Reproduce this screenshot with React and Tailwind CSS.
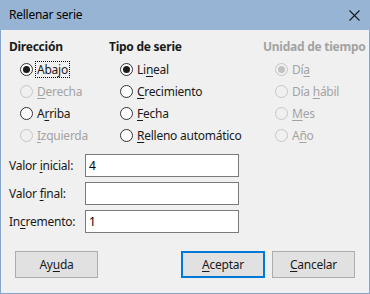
import React from 'react';

const font = { fontFamily: '"Noto Sans", "Open Sans", sans-serif' };

function U({ children }) {
  return <span className="underline underline-offset-2">{children}</span>;
}

function Radio({ checked, disabled, focus, children }) {
  const ring = disabled ? 'border-[#c6c6c6] bg-[#f0f0f0]' : 'border-[#333] bg-white';
  const dot = disabled ? 'bg-[#c2c2c2]' : 'bg-[#1a1a1a]';
  const text = disabled ? 'text-[#a3a3a3]' : 'text-[#1a1a1a]';
  return (
    <div className="flex items-center h-[22px] whitespace-nowrap">
      <span className={`w-[13px] h-[13px] rounded-full border flex items-center justify-center shrink-0 ${ring}`}>
        {checked && <span className={`w-[7px] h-[7px] rounded-full ${dot}`} />}
      </span>
      <span
        className={`ml-[3px] px-[1px] leading-[15px] ${text} ${focus ? 'outline-1 outline-dotted outline-[#000]' : ''}`}
      >
        {children}
      </span>
    </div>
  );
}

function Field({ label, value }) {
  return (
    <div className="flex items-center h-[23px]">
      <span className="w-[76px] text-[#1a1a1a] whitespace-nowrap">{label}</span>
      <div className="w-[154px] h-[23px] bg-white border border-[#7a7a7a] px-[3px] flex items-center text-[#000]">
        {value}
      </div>
    </div>
  );
}

function Btn({ primary, children }) {
  return (
    <div
      className={`h-[27px] flex items-center justify-center bg-[#e1e1e1] text-[#1a1a1a] ${
        primary ? 'border-2 border-[#0078d7]' : 'border border-[#adadad]'
      }`}
    >
      {children}
    </div>
  );
}

export default function App() {
  return (
    <div
      className="w-[370px] h-[294px] flex flex-col border-x border-b border-[#86a6cc] text-[12px] tracking-[-0.25px] bg-[#f0f0f0]"
      style={font}
    >
      {/* title bar */}
      <div className="h-[30px] bg-[#97b4d4] flex items-center justify-between pl-2 pr-[9px] -mx-px">
        <span className="text-[12px] text-[#000] pl-px">Rellenar serie</span>
        <svg width="11" height="11" viewBox="0 0 11 11" className="mr-[1px]">
          <path d="M0.5 0.5 L10.5 10.5 M10.5 0.5 L0.5 10.5" stroke="#1a1a1a" strokeWidth="1.1" fill="none" />
        </svg>
      </div>

      <div className="flex flex-col pl-2 pt-[9px]">
        {/* option groups */}
        <div className="flex">
          <div className="w-[100px]">
            <div className="font-bold h-[16px] leading-[16px] text-[#1a1a1a] whitespace-nowrap">Dirección</div>
            <div className="pl-[11px] mt-[3px]">
              <Radio checked focus>Abajo</Radio>
              <Radio disabled><U>D</U>erecha</Radio>
              <Radio>A<U>r</U>riba</Radio>
              <Radio disabled><U>I</U>zquierda</Radio>
            </div>
          </div>
          <div className="w-[154px]">
            <div className="font-bold h-[16px] leading-[16px] text-[#1a1a1a] whitespace-nowrap">Tipo de serie</div>
            <div className="pl-[11px] mt-[3px]">
              <Radio checked>Li<U>n</U>eal</Radio>
              <Radio><U>C</U>recimiento</Radio>
              <Radio><U>F</U>echa</Radio>
              <Radio><U>R</U>elleno automático</Radio>
            </div>
          </div>
          <div>
            <div className="font-bold h-[16px] leading-[16px] text-[#a3a3a3] whitespace-nowrap">Unidad de tiempo</div>
            <div className="pl-[12px] mt-[3px]">
              <Radio checked disabled>Dí<U>a</U></Radio>
              <Radio disabled>Día <U>h</U>ábil</Radio>
              <Radio disabled><U>M</U>es</Radio>
              <Radio disabled>A<U>ñ</U>o</Radio>
            </div>
          </div>
        </div>

        {/* value fields */}
        <div className="flex flex-col gap-[5px] mt-[8px]">
          <Field label={<>Valor <U>i</U>nicial:</>} value="4" />
          <Field label={<>Valor <U>f</U>inal:</>} value="" />
          <Field label={<>In<U>c</U>remento:</>} value="1" />
        </div>

        {/* buttons */}
        <div className="flex mt-[18px] pl-[6px] pr-[14px]">
          <div className="w-[83px]"><Btn>Ay<U>u</U>da</Btn></div>
          <div className="flex-1" />
          <div className="w-[84px]"><Btn primary><U>A</U>ceptar</Btn></div>
          <div className="w-[83px] ml-[7px]"><Btn><U>C</U>ancelar</Btn></div>
        </div>
      </div>
    </div>
  );
}
